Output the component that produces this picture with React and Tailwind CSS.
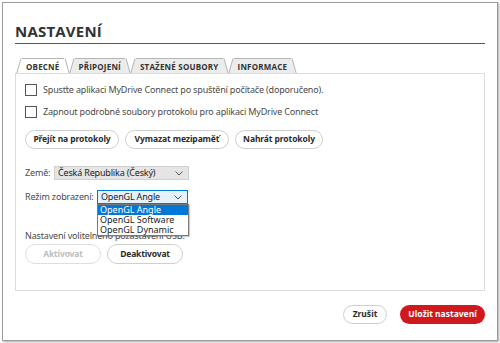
import React from "react"

const tabs = ["Obecné", "Připojení", "Stažené soubory", "Informace"]

function Slant({ side, active }) {
  const fill = active ? "#ffffff" : "#ececec"
  const d = side === "left" ? "M0.5 16 L5 0.5 L6 0.5 L6 16 Z" : "M0 0.5 L1 0.5 L5.5 16 L0 16 Z"
  const line = side === "left" ? "M0.5 16 L5 0.5" : "M1 0.5 L5.5 16"
  return (
    <svg width="6" height="16" viewBox="0 0 6 16" className="block shrink-0">
      <path d={d} fill={fill} />
      <path d={line} stroke="#b5b5b5" strokeWidth="1" fill="none" />
    </svg>
  )
}

function Tab({ label, active }) {
  return (
    <div className="flex items-end h-[16px] -mr-[1px]">
      <Slant side="left" active={active} />
      <div
        className={`h-[16px] flex items-center px-[4px] border-t border-[#b5b5b5] text-[8px] font-bold uppercase tracking-[0.2px] text-[#333] ${
          active ? "bg-white" : "bg-[#ececec]"
        }`}
      >
        {label}
      </div>
      <Slant side="right" active={active} />
    </div>
  )
}

function PillButton({ children, width, disabled }) {
  return (
    <button
      className={`${width} h-[19px] rounded-full border border-[#cfcfcf] bg-white text-[8.5px] font-bold leading-none tracking-[-0.1px] ${
        disabled ? "text-[#b9b9b9]" : "text-[#2b2b2b]"
      }`}
    >
      {children}
    </button>
  )
}

function Chevron() {
  return (
    <svg width="8" height="5" viewBox="0 0 8 5" className="block">
      <path d="M0.5 0.5 L4 4 L7.5 0.5" stroke="#555" strokeWidth="1" fill="none" />
    </svg>
  )
}

export default function App() {
  return (
    <div className="w-[500px] h-[343px] bg-white p-[2px]" style={{ fontFamily: '"Noto Sans", "Liberation Sans", sans-serif' }}>
      <div className="w-[496px] h-[339px] border border-[#9c9c9c] shadow-[1px_1px_2px_rgba(0,0,0,0.35)] bg-white px-[12px] flex flex-col">
        <h1
          className="pt-[21px] h-[40px] text-[15px] font-bold text-[#333] leading-none tracking-[0.2px]"
          style={{ fontFamily: '"Open Sans", "Noto Sans", sans-serif' }}
        >
          NASTAVENÍ
        </h1>
        <div className="h-px bg-[#c9252b]" />

        <div className="mt-[14px] flex pl-[1px]" style={{ fontFamily: '"Open Sans", "Noto Sans", sans-serif' }}>
          {tabs.map((t, i) => (
            <Tab key={t} label={t} active={i === 0} />
          ))}
        </div>

        <div className="h-[218px] border border-[#dcdcdc] -mt-px pl-[9px] pt-[9px] text-[9px] text-[#4a4a4a] tracking-[-0.17px]">
          <div className="flex items-center gap-[6px] h-[13px]">
            <span className="w-[12px] h-[12px] border border-[#555] bg-white shrink-0" />
            <span>Spusťte aplikaci MyDrive Connect po spuštění počítače (doporučeno).</span>
          </div>
          <div className="flex items-center gap-[6px] h-[13px] mt-[9px]">
            <span className="w-[12px] h-[12px] border border-[#555] bg-white shrink-0" />
            <span>Zapnout podrobné soubory protokolu pro aplikaci MyDrive Connect</span>
          </div>

          <div className="flex gap-[6px] mt-[12px]">
            <PillButton width="w-[94px]">Přejít na protokoly</PillButton>
            <PillButton width="w-[104px]">Vymazat mezipaměť</PillButton>
            <PillButton width="w-[88px]">Nahrát protokoly</PillButton>
          </div>

          <div className="flex items-center mt-[17px] h-[14px]">
            <span className="w-[29px]">Země:</span>
            <div className="w-[135px] h-[14px] bg-[#e5e5e5] border border-[#cfcfcf] flex items-center justify-between pl-[3px] pr-[5px] text-[#222]">
              <span>Česká Republika (Český)</span>
              <Chevron />
            </div>
          </div>

          <div className="flex items-start mt-[10px]">
            <span className="w-[72px] h-[14px] flex items-center">Režim zobrazení:</span>
            <div className="relative">
              <div className="w-[91px] h-[14px] bg-[#e5f1fb] border border-[#0078d7] flex items-center justify-between pl-[3px] pr-[5px] text-[#222]">
                <span>OpenGL Angle</span>
                <Chevron />
              </div>
              <div className="absolute left-0 top-[14px] w-[92px] bg-white border border-[#7a7a7a] text-[#222] z-10 tracking-normal shadow-[1px_1px_1px_rgba(0,0,0,0.2)]">
                <div className="h-[10px] leading-[10px] px-[2px] bg-[#0078d7] text-white">OpenGL Angle</div>
                <div className="h-[10px] leading-[10px] px-[2px]">OpenGL Software</div>
                <div className="h-[10px] leading-[10px] px-[2px]">OpenGL Dynamic</div>
              </div>
            </div>
          </div>

          <div className="mt-[26px] h-[12px] leading-[12px]">Nastavení volitelného pozastavení USB:</div>
          <div className="flex gap-[6px] mt-[2px]">
            <button className="h-[20px] w-[76px] rounded-full border border-[#dedede] bg-white text-[8.5px] font-bold text-[#bdbdbd]">
              Aktivovat
            </button>
            <button className="h-[20px] w-[76px] rounded-full border border-[#cfcfcf] bg-white text-[8.5px] font-bold text-[#2b2b2b]">
              Deaktivovat
            </button>
          </div>
        </div>

        <div className="flex justify-end gap-[13px] mt-[14px]">
          <button className="h-[19px] w-[44px] rounded-full border border-[#cfcfcf] bg-white text-[8.5px] font-bold text-[#2b2b2b]">
            Zrušit
          </button>
          <button className="h-[19px] w-[85px] rounded-full bg-[#d0181d] text-[8.5px] font-bold text-white">
            Uložit nastavení
          </button>
        </div>
      </div>
    </div>
  )
}
